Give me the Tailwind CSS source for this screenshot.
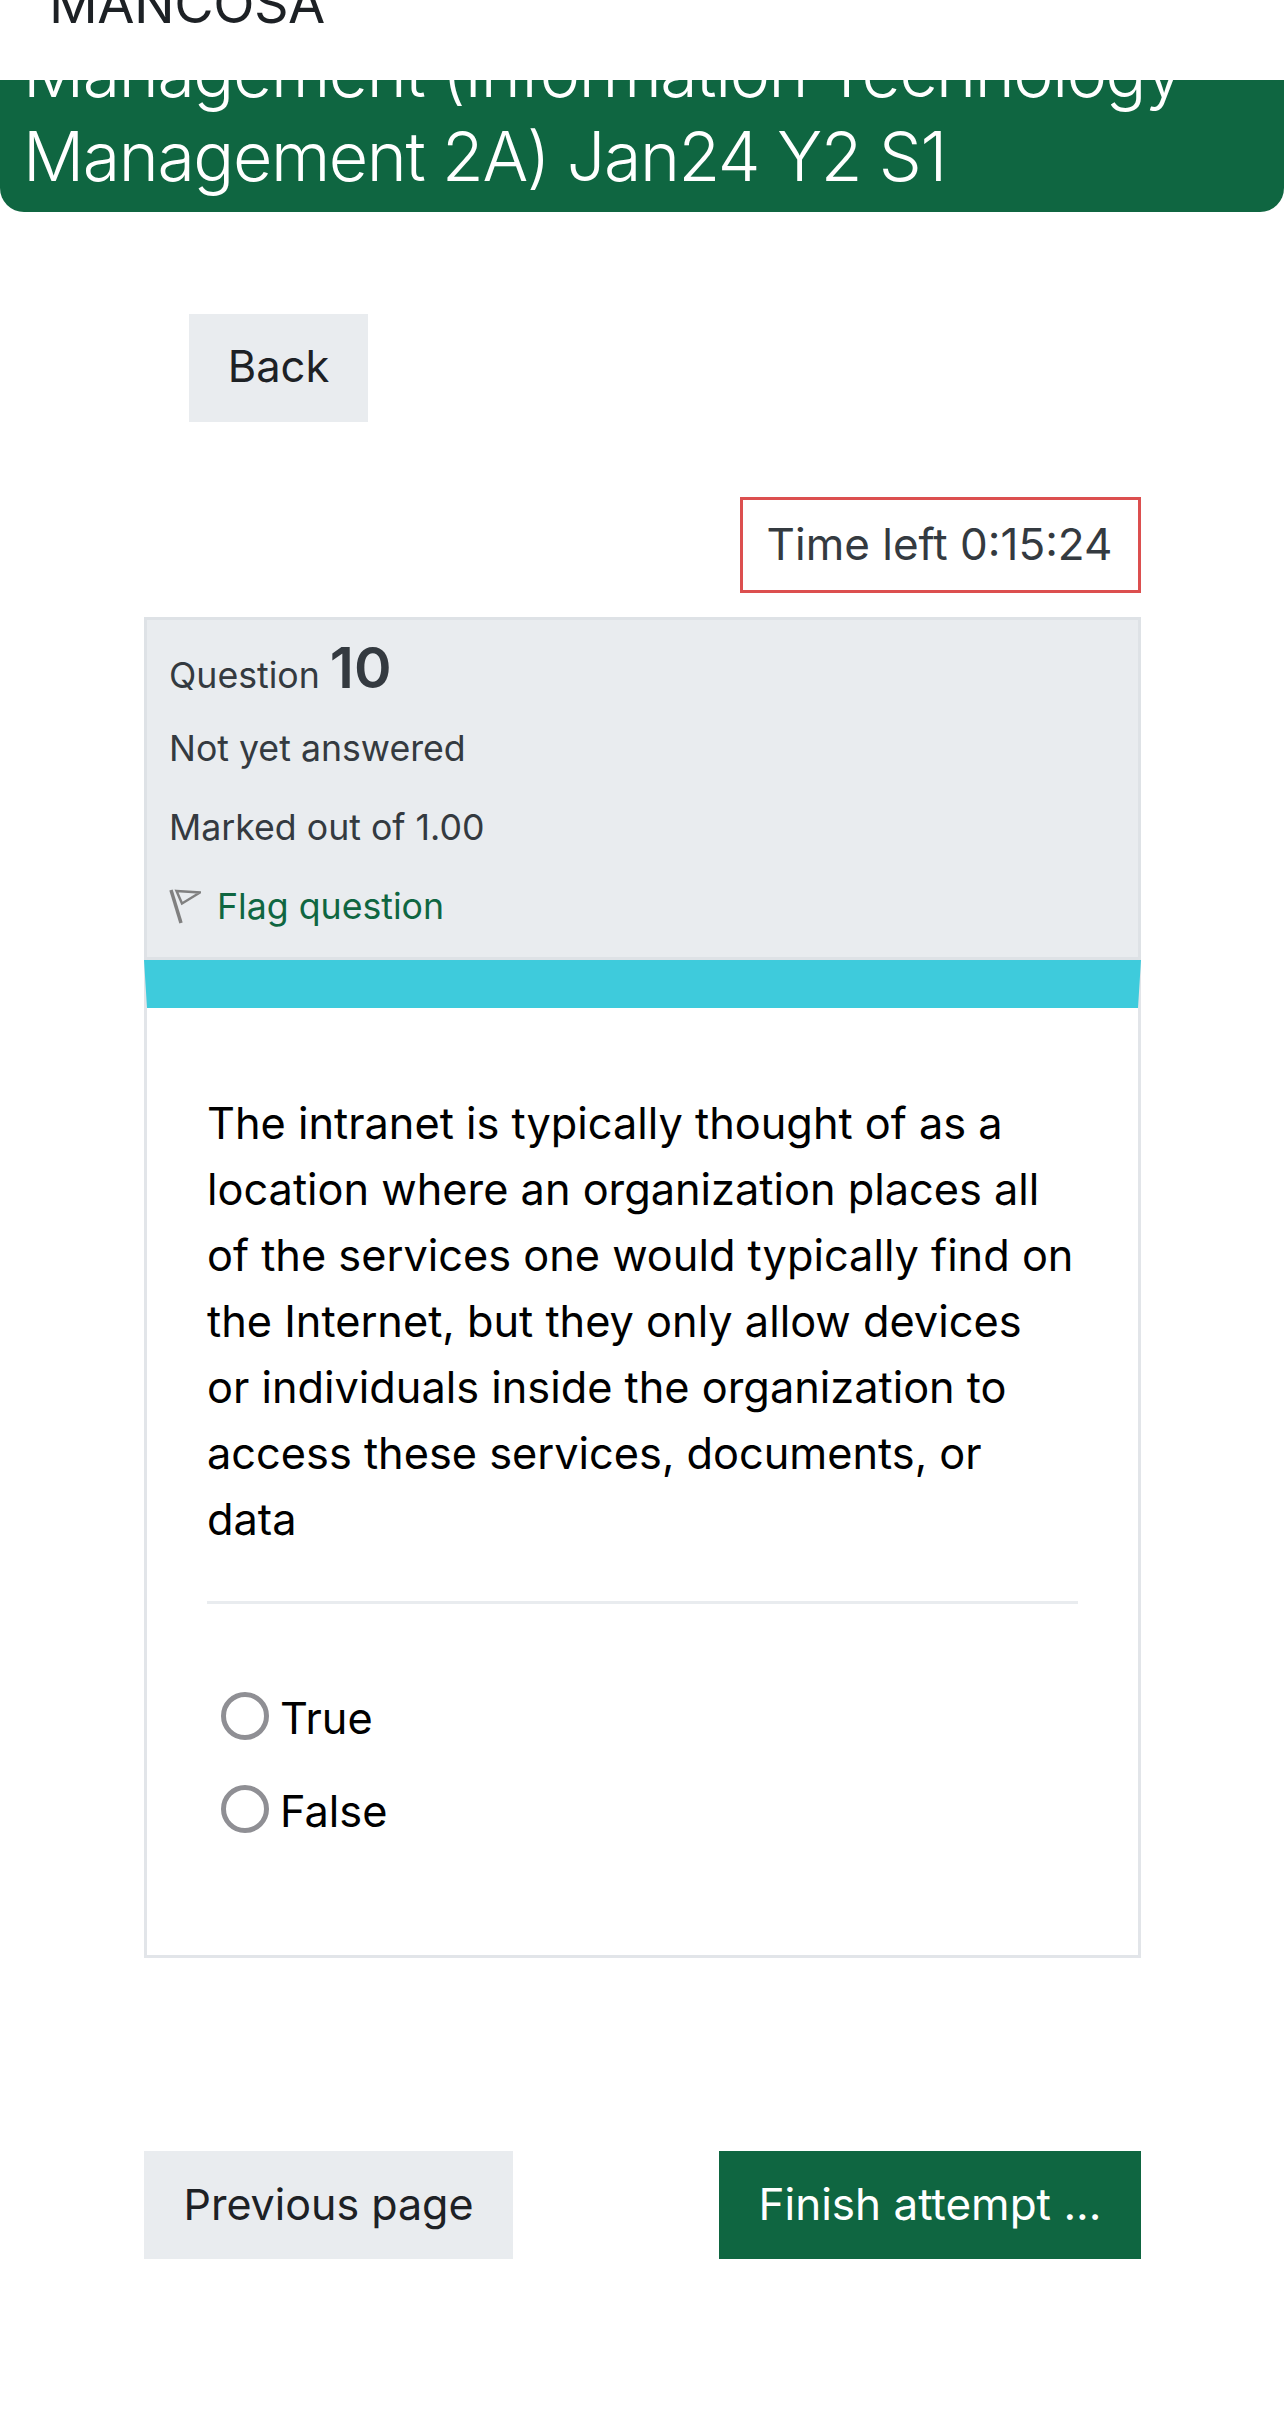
<!DOCTYPE html>
<html><head><meta charset="utf-8"><script src="https://cdn.jsdelivr.net/npm/@tailwindcss/browser@4"></script></head>
<body class="bg-white font-['Inter',sans-serif]">
<div class="w-[1284px] h-[2426px] overflow-hidden flex flex-col">
  <div class="h-[80px] overflow-hidden flex items-end shrink-0 bg-white">
    <div class="pl-[49px] pb-[48px] text-[54px] leading-[56px] tracking-[-0.5px] text-[#1d2125] whitespace-nowrap">MANCOSA</div>
  </div>
  <div class="h-[132px] overflow-hidden flex flex-col justify-end shrink-0 bg-[#0f6641] rounded-b-[24px] pl-[23px] pb-[14px] text-white text-[68px] leading-[84px] tracking-[-1.4px] font-light">
    <div class="whitespace-nowrap">Management (Information Technology</div>
    <div class="whitespace-nowrap">Management 2A) Jan24 Y2 S1</div>
  </div>
  <div class="pl-[189px] pt-[102px]">
    <div class="w-[179px] h-[108px] pb-[2px] bg-[#e9ecef] flex items-center justify-center text-[43.5px] text-[#1d2125]">Back</div>
  </div>
  <div class="pl-[144px] pr-[143px] pt-[75px]">
    <div class="flex justify-end">
      <div class="w-[401px] h-[96px] border-[3px] border-[#dc4f4f] pb-[2px] pr-[2px] flex items-center justify-center text-[44px] text-[#343a40] whitespace-nowrap">Time left 0:15:24</div>
    </div>
    <div class="mt-[24px] h-[1341px] flex flex-col">
      <div class="h-[343px] border-[3px] border-[#dee2e6] bg-[#e9ecef] pl-[22px] text-[35.7px] text-[#343a40] shrink-0">
        <div class="h-[82px] flex items-end gap-[10px]"><span class="leading-[50px] pb-[2px]">Question</span><span class="text-[57px] leading-[66px] font-semibold pb-[1px]">10</span></div>
        <div class="mt-[22px] leading-[48px]">Not yet answered</div>
        <div class="mt-[31px] leading-[48px]">Marked out of 1.00</div>
        <div class="mt-[31px] flex items-center gap-[16px] leading-[48px] text-[#0f6641]">
          <svg class="w-[32px] h-[35px] shrink-0" viewBox="0 0 32 35" fill="none" stroke="#808080"><path d="M2 1 L12 34" stroke-width="3.5"/><path d="M7.5 2 L31 3.5 L13 14.5 Z" stroke-width="2.5"/></svg>
          <span>Flag question</span>
        </div>
      </div>
      <div class="h-[998px] border-[3px] border-t-[48px] border-[#e2e5e9] border-t-[#3ecbdc] px-[60px] pt-[82px] text-[43.3px] leading-[66px] text-black">
        <p class="pb-[49px] border-b-[3px] border-[#e9ecef] whitespace-nowrap">The intranet is typically thought of as a<br>location where an organization places all<br>of the services one would typically find on<br>the Internet, but they only allow devices<br>or individuals inside the organization to<br>access these services, documents, or<br>data</p>
        <div class="mt-[88px] pl-[14px] flex items-center gap-[11px] h-[48px]"><span class="w-[48px] h-[48px] rounded-full border-[5px] border-[#8f8f94] shrink-0"></span><span class="mt-[4px]">True</span></div>
        <div class="mt-[45px] pl-[14px] flex items-center gap-[11px] h-[48px]"><span class="w-[48px] h-[48px] rounded-full border-[5px] border-[#8f8f94] shrink-0"></span><span class="mt-[4px]">False</span></div>
      </div>
    </div>
    <div class="mt-[193px] flex justify-between">
      <div class="w-[369px] h-[108px] pb-[2px] bg-[#e9ecef] flex items-center justify-center text-[43px] text-[#1d2125]">Previous page</div>
      <div class="w-[422px] h-[108px] pb-[2px] bg-[#0f6641] flex items-center justify-center text-[44px] text-white">Finish attempt ...</div>
    </div>
  </div>
</div>
</body></html>
